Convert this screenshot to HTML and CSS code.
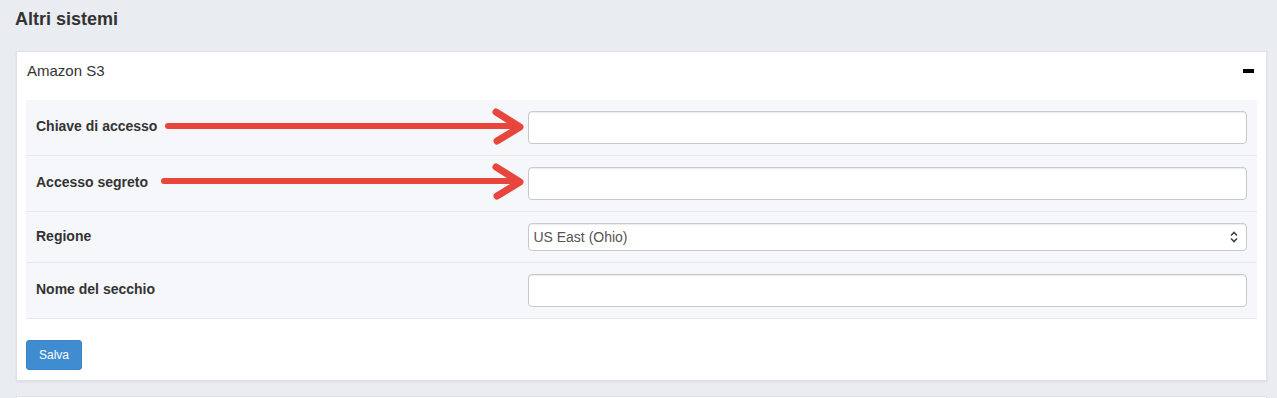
FILE: index.html
```html
<!DOCTYPE html>
<html lang="it">
<head>
    <meta charset="UTF-8">
    <title>Altri sistemi</title>
    <link rel="stylesheet" href="styles.css">
</head>
<body>

<h3 class="page-title">Altri sistemi</h3>

<div class="panel">
    <div class="panel-heading">
        <span>Amazon S3</span>
        <span class="collapse-icon"></span>
    </div>

    <div class="panel-body">
        <div class="table-wrap">
            <table class="settings">
                <tr>
                    <td class="label">Chiave di accesso</td>
                    <td><input type="text" class="field"></td>
                </tr>
                <tr>
                    <td class="label">Accesso segreto</td>
                    <td><input type="text" class="field"></td>
                </tr>
                <tr class="row-select">
                    <td class="label">Regione</td>
                    <td>
                        <div class="select-wrap">
                            <select class="field select">
                                <option>US East (Ohio)</option>
                                <option>US East (N. Virginia)</option>
                                <option>US West (Oregon)</option>
                            </select>
                            <svg class="select-arrows" width="8" height="12" viewBox="0 0 8 12">
                                <path d="M1 4.5 L4 1.5 L7 4.5 M1 7.5 L4 10.5 L7 7.5" fill="none" stroke="#444" stroke-width="1.6"/>
                            </svg>
                        </div>
                    </td>
                </tr>
                <tr>
                    <td class="label">Nome del secchio</td>
                    <td><input type="text" class="field"></td>
                </tr>
            </table>

            <!-- annotation arrows drawn over the form -->
            <svg class="annotations" width="1231" height="218" viewBox="0 0 1231 218">
                <g fill="none" stroke="#e8453c" stroke-linecap="round" stroke-linejoin="round">
                    <line x1="142" y1="26" x2="489" y2="26" stroke-width="6"/>
                    <polyline points="470,12 494,27 471,41" stroke-width="7"/>
                    <line x1="138" y1="81" x2="489" y2="81" stroke-width="6"/>
                    <polyline points="470,67 494,82 471,96" stroke-width="7"/>
                </g>
            </svg>
        </div>

        <button type="button" class="btn">Salva</button>
    </div>
</div>

<div class="panel panel-next"></div>

</body>
</html>
```

FILE: styles.css
```css
body {
    font-family: "Liberation Sans", Arial, sans-serif;
    background-color: #e9ecf1;
    color: #333;
    margin: 0;
    padding: 9px 10px 0 16px;
}
.page-title {
    margin: 0 0 22px -1px;
    font-size: 18px;
    line-height: 20px;
    font-weight: bold;
    color: #333;
}
.panel {
    background-color: #fff;
    border: 1px solid #dfe3e8;
    box-shadow: 0 1px 2px rgba(0, 0, 0, 0.08);
}
.panel-heading {
    display: flex;
    justify-content: space-between;
    align-items: center;
    padding: 9px 12px 0 10px;
    font-size: 15px;
    line-height: 20px;
}
.collapse-icon {
    display: block;
    width: 11px;
    height: 4px;
    background-color: #000;
}
.panel-body {
    padding: 19px 9px 10px;
}
.table-wrap {
    position: relative;
    margin-bottom: 21px;
}
.settings {
    width: 100%;
    border-collapse: collapse;
}
.settings td {
    background-color: #f5f7fa;
    border-bottom: 1px solid #e4e8ec;
    padding: 11px 10px;
    vertical-align: middle;
}
.settings td.label {
    width: 40%;
    font-size: 14px;
    font-weight: bold;
    color: #333;
    padding-bottom: 14px;
}
.field {
    display: block;
    box-sizing: border-box;
    width: 100%;
    height: 33px;
    padding: 4px 5px;
    border: 1px solid #c6c9cd;
    border-radius: 4px;
    background-color: #fff;
    box-shadow: inset 0 1px 1px rgba(0, 0, 0, 0.08);
    font-family: "Liberation Sans", Arial, sans-serif;
    font-size: 14px;
    color: #555;
}
.select-wrap {
    position: relative;
}
.select {
    height: 28px;
    padding: 2px 4px;
    appearance: none;
    -webkit-appearance: none;
}
.select-arrows {
    position: absolute;
    right: 9px;
    top: 8px;
}
.annotations {
    position: absolute;
    left: 0;
    top: 0;
    pointer-events: none;
}
.btn {
    display: block;
    height: 30px;
    padding: 0 12px;
    background-color: #3f8dd0;
    color: #fff;
    border: 1px solid #3a85c6;
    border-radius: 3px;
    font-family: "Liberation Sans", Arial, sans-serif;
    font-size: 12px;
}
.panel-next {
    margin-top: 15px;
    height: 2px;
}
```
